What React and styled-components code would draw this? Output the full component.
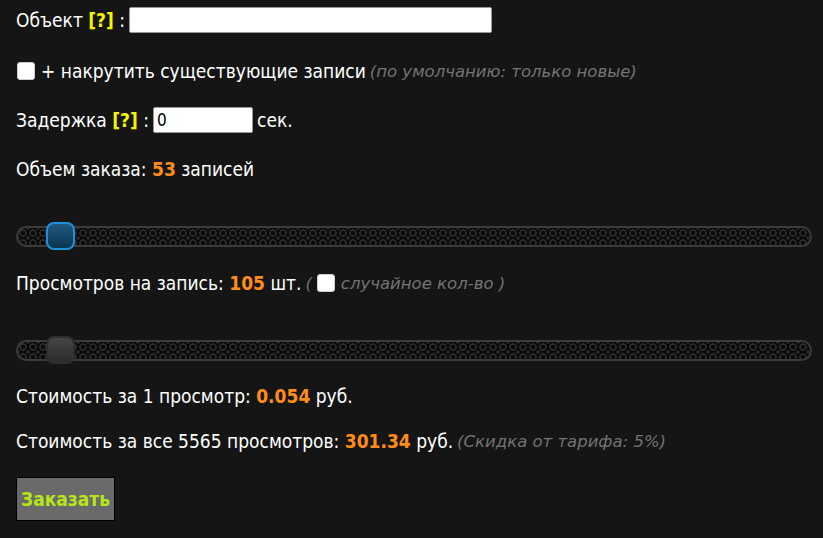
import React from "react";
import styled, { createGlobalStyle } from "styled-components";

const GlobalStyle = createGlobalStyle`
  html, body {
    margin: 0;
    padding: 0;
    background: #151515;
  }
  body {
    font-family: "DejaVu Sans", Verdana, sans-serif;
    font-stretch: condensed;
    color: #ffffff;
  }
`;

function Slider({ value, active }) {
  return (
    <Track>
      <Thumb $active={active} style={{ left: value }} />
    </Track>
  );
}

function App() {
  return (
    <Page>
      <GlobalStyle />
      <Row>
        <Label>
          Объект <Help>[?]</Help> :
        </Label>
        <TextInput $width={363} />
      </Row>
      <Row $top={25}>
        <Check type="checkbox" />
        <Label>+ накрутить существующие записи</Label>
        <Note>(по умолчанию: только новые)</Note>
      </Row>
      <Row $top={23}>
        <Label>
          Задержка <Help>[?]</Help> :
        </Label>
        <TextInput $width={100} defaultValue="0" />
        <Label>сек.</Label>
      </Row>
      <Row $top={23}>
        <Label>
          Объем заказа: <Num>53</Num> записей
        </Label>
      </Row>
      <SliderRow $top={44}>
        <Slider value={28} active />
      </SliderRow>
      <Row $top={23}>
        <Label>
          Просмотров на запись: <Num>105</Num> шт.
        </Label>
        <Note>(</Note>
        <Check type="checkbox" />
        <Note>случайное кол-во )</Note>
      </Row>
      <SliderRow $top={44}>
        <Slider value={28} />
      </SliderRow>
      <Row $top={22}>
        <Label>
          Стоимость за 1 просмотр: <Num>0.054</Num> руб.
        </Label>
      </Row>
      <Row $top={19}>
        <Label>
          Стоимость за все 5565 просмотров: <Num>301.34</Num> руб.
        </Label>
        <Note>(Скидка от тарифа: 5%)</Note>
      </Row>
      <ButtonRow>
        <OrderButton type="button">Заказать</OrderButton>
      </ButtonRow>
    </Page>
  );
}

export default App;

const Page = styled.div`
  width: 823px;
  height: 538px;
  box-sizing: border-box;
  padding: 7px 11px 0 16px;
  background: #151515;
  overflow: hidden;
`;

const Row = styled.div`
  display: flex;
  align-items: center;
  gap: 4px;
  height: 26px;
  margin-top: ${(p) => p.$top || 0}px;
`;

const SliderRow = styled.div`
  margin-top: ${(p) => p.$top || 0}px;
`;

const ButtonRow = styled.div`
  margin-top: 23px;
`;

const Label = styled.span`
  font-size: 19px;
  line-height: 22px;
  white-space: nowrap;
`;

const Help = styled.span`
  color: #f5f500;
  font-weight: bold;
`;

const Num = styled.span`
  color: #ff8c1a;
  font-weight: bold;
`;

const Note = styled.span`
  font-size: 16.5px;
  font-style: italic;
  font-stretch: normal;
  color: #737373;
  white-space: nowrap;
`;

const TextInput = styled.input`
  box-sizing: border-box;
  width: ${(p) => p.$width}px;
  height: 26px;
  margin: 0;
  padding: 0 3px;
  border: 1px solid #999;
  border-radius: 2px;
  background: #ffffff;
  font-family: "DejaVu Sans", sans-serif;
  font-stretch: condensed;
  font-size: 17px;
  color: #000;
  outline: none;
`;

const Check = styled.input`
  appearance: none;
  width: 18px;
  height: 18px;
  margin: 0 2px 0 1px;
  border-radius: 3px;
  background: #ffffff;
  border: 1px solid #cfcfcf;
  box-sizing: border-box;
`;

const Track = styled.div`
  position: relative;
  height: 21px;
  box-sizing: border-box;
  border: 2px solid #3b3b3b;
  border-radius: 11px;
  background-color: #0a0a0a;
  background-image:
    radial-gradient(circle, transparent 2px, #2c2c2c 2.5px, #2c2c2c 3.5px, transparent 4px),
    radial-gradient(circle, #262626 1.5px, transparent 2px);
  background-size: 10px 10px, 10px 10px;
  background-position: 0 0, 5px 5px;
`;

const Thumb = styled.div`
  position: absolute;
  top: -6px;
  width: 29px;
  height: 28px;
  box-sizing: border-box;
  border-radius: 8px;
  border: 2px solid ${(p) => (p.$active ? "#1f8fd6" : "#2e2e2e")};
  background: ${(p) =>
    p.$active
      ? "linear-gradient(#1f5a7e, #0c3450)"
      : "linear-gradient(#464646, #2c2c2c)"};
`;

const OrderButton = styled.button`
  display: block;
  width: 99px;
  height: 44px;
  margin: 0;
  padding: 0;
  background: #6a6a6a;
  border: 1px solid #000;
  font-family: "DejaVu Sans", sans-serif;
  font-stretch: condensed;
  font-weight: bold;
  font-size: 19px;
  color: #b4e619;
  cursor: pointer;
`;
